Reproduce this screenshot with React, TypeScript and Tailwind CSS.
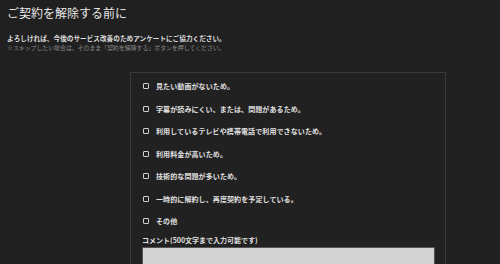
import React from "react";

const reasons = [
  "見たい動画がないため。",
  "字幕が読みにくい、または、問題があるため。",
  "利用しているテレビや携帯電話で利用できないため。",
  "利用料金が高いため。",
  "技術的な問題が多いため。",
  "一時的に解約し、再度契約を予定している。",
  "その他",
];

export default function App() {
  return (
    <div
      className="w-[500px] h-[264px] overflow-hidden bg-[#202020] text-[#e6e6e6]"
      style={{ fontFamily: '"Noto Sans CJK JP", "Noto Sans", sans-serif' }}
    >
      <div className="pl-[7px] pt-[4px]">
        <h1 className="text-[12px] leading-[18px] text-[#e8e8e8]">ご契約を解除する前に</h1>
        <p className="mt-[12px] text-[6.65px] leading-[9px] font-bold text-[#dcdcdc]">
          よろしければ、今後のサービス改善のためアンケートにご協力ください。
        </p>
        <p className="text-[5.9px] leading-[9px] text-[#8a8a8a]">
          ※スキップしたい場合は、そのまま「契約を解除する」ボタンを押してください。
        </p>
      </div>
      <div className="ml-[130px] mt-[20px] w-[316px] h-[200px] border border-[#3a3a3a] bg-[#212121] pl-[11px] pr-[11px] pt-[2px]">
        <div className="flex flex-col">
          {reasons.map((r) => (
            <div key={r} className="flex items-center h-[22.5px]">
              <span className="w-[6px] h-[6px] border border-[#cfcfcf] rounded-[1px] ml-[1px]" />
              <span className="ml-[7px] text-[7px] font-bold text-[#e0e0e0] tracking-[0.1px]">{r}</span>
            </div>
          ))}
        </div>
        <div className="mt-[3px] text-[7px] font-bold text-[#e0e0e0] leading-[9px]">
          コメント(500文字まで入力可能です)
        </div>
        <div className="mt-[2px] w-[293px] h-[40px] bg-[#d2d2d2] border border-[#555]" />
      </div>
    </div>
  );
}
